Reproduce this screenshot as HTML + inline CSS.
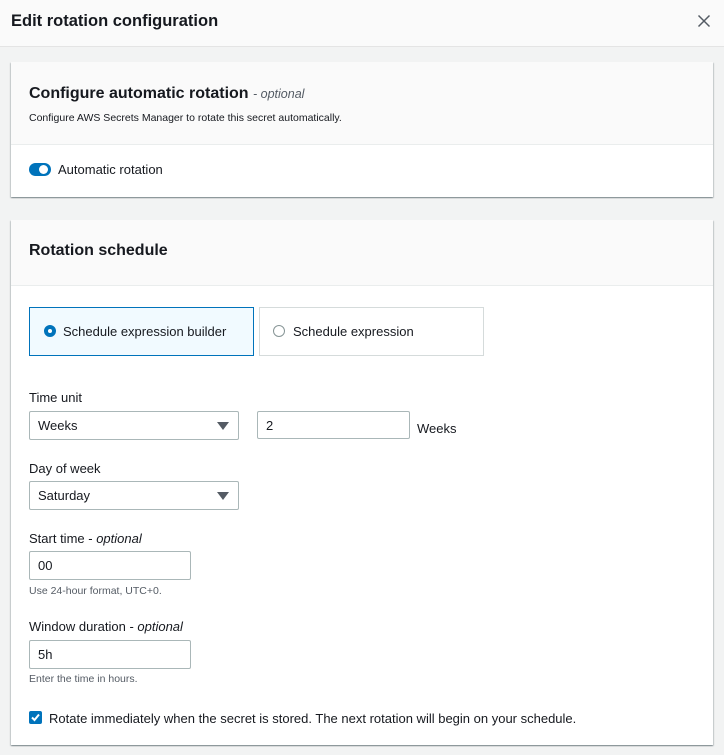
<!DOCTYPE html>
<html><head><style>
*{box-sizing:border-box;margin:0;padding:0}
body{width:724px;height:755px;background:#f2f3f3;font-family:"Liberation Sans",sans-serif;color:#16191f;position:relative;overflow:hidden;font-size:13px}
.a{position:absolute}
.hdr{left:0;top:0;width:724px;height:47px;background:#fafafa;border-bottom:1px solid #e4e4e4}
.panel{background:#fff;box-shadow:0 1px 1px rgba(0,28,36,.3),1px 1px 1px rgba(0,28,36,.15),-1px 1px 1px rgba(0,28,36,.15);}
.ph{background:#fafafa;border-bottom:1px solid #eaeded}
.inp{border:1px solid #aab7b8;background:#fff;border-radius:2px;height:29px;padding-left:8px;line-height:27px;font-size:13px}
.lbl{font-size:13px}
.hint{font-size:10.5px;color:#545b64}
.tri{position:absolute;right:9px;top:10px;width:0;height:0;border-left:6px solid transparent;border-right:6px solid transparent;border-top:8px solid #545b64}
</style></head><body>
<div class="a hdr"></div>
<div class="a" style="left:11px;top:12px;font-size:16.5px;font-weight:bold">Edit rotation configuration</div>
<svg class="a" style="left:697px;top:14px" width="14" height="14" viewBox="0 0 14 14"><path d="M1.5 1.5L12.5 12.5M12.5 1.5L1.5 12.5" stroke="#545b64" stroke-width="1.5"/></svg>

<div class="a panel" style="left:11px;top:62px;width:702px;height:135px"></div>
<div class="a ph" style="left:11px;top:62px;width:702px;height:83px"></div>
<div class="a" style="left:29px;top:85px;font-size:16px;font-weight:bold">Configure automatic rotation <span style="font-weight:normal;font-style:italic;font-size:12.5px;color:#545b64">- optional</span></div>
<div class="a hint" style="left:29px;top:112px;color:#16191f">Configure AWS Secrets Manager to rotate this secret automatically.</div>
<div class="a" style="left:29px;top:163px;width:22px;height:13px;border-radius:7px;background:#0073bb"></div>
<div class="a" style="left:39px;top:165px;width:9px;height:9px;border-radius:50%;background:#fff"></div>
<div class="a" style="left:58px;top:162px;font-size:13px">Automatic rotation</div>

<div class="a panel" style="left:11px;top:220px;width:702px;height:525px"></div>
<div class="a ph" style="left:11px;top:220px;width:702px;height:66px"></div>
<div class="a" style="left:29px;top:242px;font-size:16px;font-weight:bold">Rotation schedule</div>

<div class="a" style="left:29px;top:307px;width:225px;height:49px;background:#f1faff;border:1px solid #0073bb"></div>
<div class="a" style="left:44px;top:325px;width:12px;height:12px;border-radius:50%;border:4px solid #0073bb;background:#fff"></div>
<div class="a" style="left:63px;top:324px">Schedule expression builder</div>
<div class="a" style="left:259px;top:307px;width:225px;height:49px;background:#fff;border:1px solid #d5dbdb"></div>
<div class="a" style="left:273px;top:325px;width:12px;height:12px;border-radius:50%;border:1px solid #879596"></div>
<div class="a" style="left:293px;top:324px">Schedule expression</div>

<div class="a lbl" style="left:29px;top:390px">Time unit</div>
<div class="a inp" style="left:29px;top:411px;width:210px">Weeks<div class="tri"></div></div>
<div class="a inp" style="left:257px;top:411px;width:153px;height:28px">2</div>
<div class="a" style="left:417px;top:421px">Weeks</div>

<div class="a lbl" style="left:29px;top:461px">Day of week</div>
<div class="a inp" style="left:29px;top:481px;width:210px">Saturday<div class="tri"></div></div>

<div class="a lbl" style="left:29px;top:531px">Start time - <i>optional</i></div>
<div class="a inp" style="left:29px;top:551px;width:162px">00</div>
<div class="a hint" style="left:29px;top:585px">Use 24-hour format, UTC+0.</div>

<div class="a lbl" style="left:29px;top:619px">Window duration - <i>optional</i></div>
<div class="a inp" style="left:29px;top:640px;width:162px">5h</div>
<div class="a hint" style="left:29px;top:673px">Enter the time in hours.</div>

<div class="a" style="left:29px;top:711px;width:13px;height:13px;border-radius:2px;background:#0073bb"></div>
<svg class="a" style="left:29px;top:711px" width="13" height="13" viewBox="0 0 13 13"><path d="M3 6.5L5.5 9L10 3.5" stroke="#fff" stroke-width="2" fill="none"/></svg>
<div class="a" style="left:49px;top:711px">Rotate immediately when the secret is stored. The next rotation will begin on your schedule.</div>
</body></html>
